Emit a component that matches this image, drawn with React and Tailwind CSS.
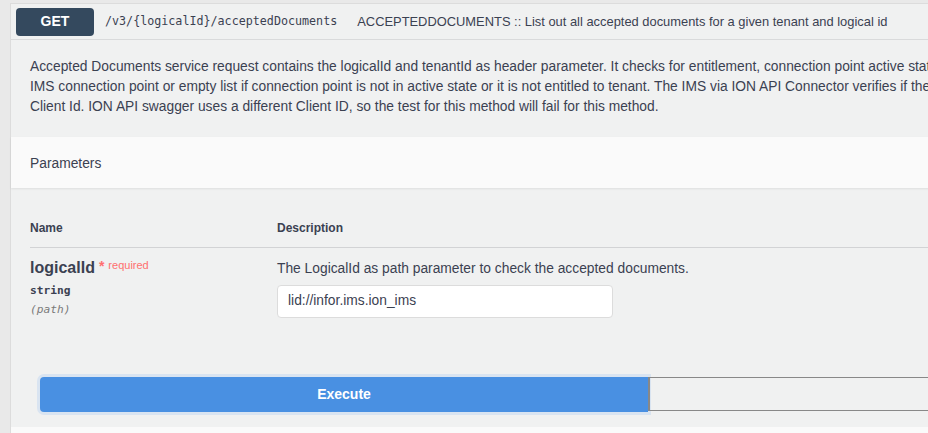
import * as React from 'react';

const sans = 'font-["Liberation_Sans",Arial,sans-serif]';
const mono = 'font-["DejaVu_Sans_Mono","Liberation_Mono",monospace]';

export default function App() {
    return (
        <div className={`w-[928px] h-[433px] overflow-hidden bg-[#e9e9e9] pt-[3px] pl-[10px] text-[#3b4151] ${sans}`}>
            <div className="w-[1100px] border-l border-t border-[#dcdcdc] bg-[#f0f1f1]">
                {/* Summary bar */}
                <div className="h-[36px] flex items-center pl-[5px] border-b border-[#d9dadb]">
                    <span className="w-[78px] h-[28px] rounded-[4px] bg-[#34495e] text-white text-[14px] font-bold flex items-center justify-center">
                        GET
                    </span>
                    <span className={`ml-[11px] text-[11.7px] text-[#3b4151] ${mono}`}>/v3/&#123;logicalId&#125;/acceptedDocuments</span>
                    <span className="ml-[20px] text-[12.9px] text-[#3b4151]">
                        ACCEPTEDDOCUMENTS :: List out all accepted documents for a given tenant and logical id
                    </span>
                </div>

                {/* Description */}
                <div className="pl-[19px] pt-[17px] pb-[20px] text-[13.8px] leading-[20px] whitespace-nowrap">
                    <p>Accepted Documents service request contains the logicalId and tenantId as header parameter. It checks for entitlement, connection point active status and returns the accepted documents for the</p>
                    <p>IMS connection point or empty list if connection point is not in active state or it is not entitled to tenant. The IMS via ION API Connector verifies if the request is coming from a valid</p>
                    <p>Client Id. ION API swagger uses a different Client ID, so the test for this method will fail for this method.</p>
                </div>

                {/* Parameters header */}
                <div className="h-[51px] bg-[#fafafa] flex items-center pl-[19px] pt-[3px] shadow-[0_1px_2px_rgba(0,0,0,0.08)]">
                    <h4 className="text-[13.8px]">Parameters</h4>
                </div>

                {/* Parameters table */}
                <div className="pl-[19px]">
                    <div className="mt-[32px] pb-[11px] border-b border-[#d2d3d5] flex text-[12px] leading-[16px] font-bold">
                        <div className="w-[247px]">Name</div>
                        <div>Description</div>
                    </div>
                    <div className="flex pt-[10px]">
                        <div className="w-[247px]">
                            <div className="flex items-start text-[16px] leading-[20px] font-bold">
                                logicalId
                                <span className="ml-[4px] text-[#ff6f6f] text-[14px] leading-[16px] font-bold">*</span>
                                <span className="ml-[4px] text-[#ff6f6f] text-[11px] leading-[14px] font-normal">required</span>
                            </div>
                            <div className={`mt-[5px] text-[11.2px] leading-[16px] font-bold ${mono}`}>string</div>
                            <div className={`mt-[3px] text-[11.2px] leading-[16px] italic text-[#7a7a7a] ${mono}`}>(path)</div>
                        </div>
                        <div>
                            <p className="mt-[2px] text-[13.8px] leading-[18px]">The LogicalId as path parameter to check the accepted documents.</p>
                            <div className="mt-[7px] w-[336px] h-[33px] bg-white border border-[#dcdcdc] rounded-[4px] flex items-center px-[10px] text-[13.8px]">
                                lid://infor.ims.ion_ims
                            </div>
                        </div>
                    </div>

                    {/* Execute */}
                    <div className="flex mt-[59px] pl-[10px]">
                        <button className="w-[608px] h-[35px] bg-[#4990e2] rounded-l-[4px] text-white text-[14px] font-bold shadow-[0_0_0_3px_#d9e4f1]">
                            Execute
                        </button>
                        <div className="flex-1 h-[34px] border border-[#888888] border-l-2"></div>
                    </div>
                </div>

                <div className="mt-[15px] h-[30px] bg-[#fafafa]"></div>
            </div>
        </div>
    );
}
